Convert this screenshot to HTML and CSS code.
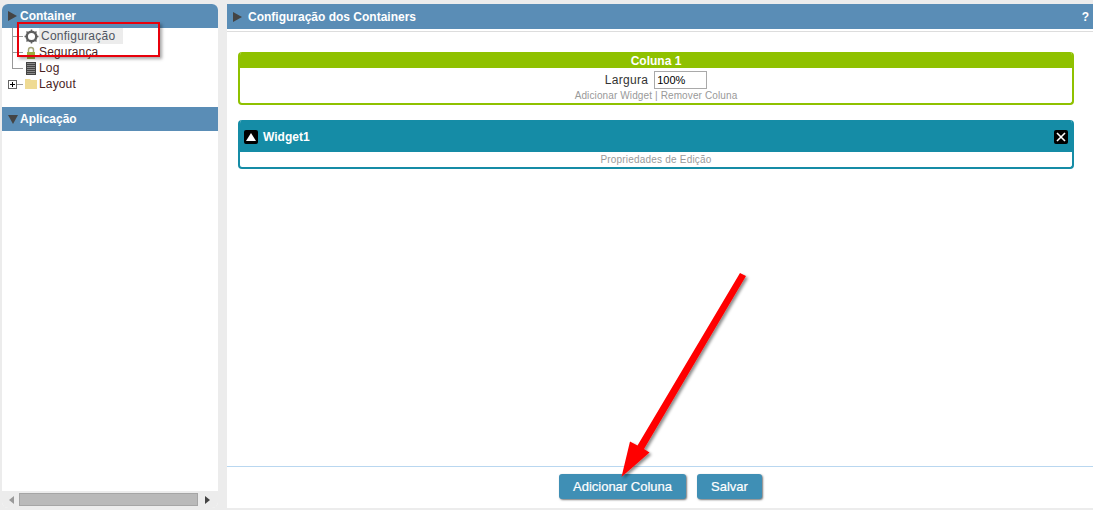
FILE: index.html
```html
<!DOCTYPE html>
<html lang="pt">
<head>
<meta charset="utf-8">
<title>Configuração dos Containers</title>
<link rel="stylesheet" href="styles.css">
</head>
<body>
<div class="app">
  <aside class="side">
    <div class="side-head side-head-first"><span class="tri-right"></span>Container</div>
    <ul class="tree">
      <li class="node selected">
        <svg class="ico" width="15" height="15" viewBox="0 0 15 15"><circle cx="7.500" cy="7.500" r="4.800" fill="none" stroke="#5f5f5f" stroke-width="2.500"/><path d="M7.500 0.500v2.400M7.500 12.100v2.400M0.500 7.500h2.400M12.100 7.500h2.400M2.500 2.500l1.700 1.700M10.800 10.800l1.700 1.700M2.500 12.500l1.700-1.700M10.800 4.200l1.700-1.700" stroke="#5f5f5f" stroke-width="1.500"/></svg>
        <span class="lbl">Configuração</span>
      </li>
      <li class="node">
        <svg class="ico ico-s" width="12" height="13" viewBox="0 0 12 13"><path d="M3.500 6.500V4a2.500 2.500 0 0 1 5 0v2.500" fill="none" stroke="#a5a57c" stroke-width="1.500"/><rect x="2" y="6" width="8" height="7" fill="#9cae3a"/></svg>
        <span class="lbl">Segurança</span>
      </li>
      <li class="node">
        <svg class="ico ico-s" width="12" height="13" viewBox="0 0 12 13"><rect x="1.500" y="0.500" width="9" height="12" fill="#8a8a8a" stroke="#444"/><path d="M2 2.500h8M2 4.500h8M2 6.500h8M2 8.500h8M2 10.500h8" stroke="#444"/></svg>
        <span class="lbl">Log</span>
      </li>
      <li class="node">
        <span class="plus"></span>
        <svg class="ico ico-s" width="12" height="10" viewBox="0 0 12 10"><path d="M0 0h5l1 1h6v9H0z" fill="#efdb94"/></svg>
        <span class="lbl">Layout</span>
      </li>
    </ul>
    <div class="side-head side-head-second"><span class="tri-down"></span>Aplicação</div>
    <div class="side-fill"></div>
    <div class="scrollbar">
      <span class="arrow-left"></span>
      <span class="thumb"></span>
      <span class="arrow-right"></span>
    </div>
  </aside>
  <main class="main">
    <div class="main-head"><span class="tri-right"></span>Configuração dos Containers<span class="help">?</span></div>
    <div class="content">
      <section class="column">
        <h2 class="column-title">Coluna 1</h2>
        <div class="column-row"><label class="width-label">Largura</label><input class="width-input" value="100%"></div>
        <div class="links">Adicionar Widget | Remover Coluna</div>
      </section>
      <section class="widget">
        <div class="widget-head">
          <span class="sq"><svg width="10" height="8" viewBox="0 0 10 8"><path d="M5 0l5 8H0z" fill="#fff"/></svg></span>
          <span class="widget-title">Widget1</span>
          <span class="sq sq-close"><svg width="10" height="10" viewBox="0 0 10 10"><path d="M1 1l8 8M9 1l-8 8" stroke="#fff" stroke-width="1.600"/></svg></span>
        </div>
        <div class="links links-widget">Propriedades de Edição</div>
      </section>
    </div>
    <div class="footer">
      <button class="btn btn-add">Adicionar Coluna</button>
      <button class="btn btn-save">Salvar</button>
    </div>
  </main>
</div>
<div class="redbox"></div>
<svg class="bigarrow" width="160" height="225" viewBox="0 0 160 225">
  <defs><filter id="sh" x="-20%" y="-20%" width="140%" height="140%"><feDropShadow dx="2" dy="2" stdDeviation="1.500" flood-color="#000" flood-opacity=".45"/></filter></defs>
  <path filter="url(#sh)" d="M140 13L146 16L44 189L49.500 192.500L21.500 217L30 181.500L37.500 185.500Z" fill="#f00"/>
</svg>
</body>
</html>
```
FILE: styles.css
```css
* { box-sizing: border-box; }
html, body { margin: 0; padding: 0; height: 510px; overflow: hidden; }
body { background: #ececec; font-family: "Liberation Sans", Arial, sans-serif; position: relative; }
.app { display: flex; height: 510px; padding: 4px 0 2px 2px; gap: 9px; }
.side { width: 216px; background: #fff; display: flex; flex-direction: column; border-radius: 6px; overflow: hidden; }
.side-head { background: #5a8db6; color: #fff; font-weight: bold; font-size: 12px; display: flex; align-items: center; height: 24px; padding-left: 6px; }
.side-head-second { margin-top: 11px; }
.tri-right { width: 0; height: 0; border-style: solid; border-width: 5px 0 5px 9px; border-color: transparent transparent transparent #444; margin-right: 3px; }
.tri-down { width: 0; height: 0; border-style: solid; border-width: 9px 5px 0 5px; border-color: #444 transparent transparent transparent; margin-right: 2px; }
.tree { list-style: none; margin: 0; padding: 0; font-size: 12px; color: #4a1f1f; height: 68px; background-image: linear-gradient(#999,#999); background-size: 1px 41px; background-position: 10px 0; background-repeat: no-repeat; }
.node { height: 16px; display: flex; align-items: center; padding-left: 23px; position: relative; }
.node::before { content: ""; position: absolute; left: 10px; top: 8px; width: 11px; height: 1px; background: #999; }
.ico { flex: none; }
.ico-s { margin-right: 2px; }
.lbl { letter-spacing: .15px; }
.selected { padding-left: 22px; }
.selected .lbl { background: #ececec; color: #4f5560; width: 84px; padding-left: 2px; line-height: 16px; letter-spacing: .25px; }
.plus { position: absolute; left: 6px; top: 4px; width: 9px; height: 9px; border: 1px solid #666; background: linear-gradient(#000,#000) center/5px 1px no-repeat, linear-gradient(#000,#000) center/1px 5px no-repeat, #fff; z-index: 1; }
.side-fill { flex: 1; }
.scrollbar { height: 17px; background: #ececec; display: flex; align-items: center; padding: 0 8px 0 6px; }
.thumb { width: 180px; height: 13px; background: #b9b9b9; border: 1px solid #a5a5a5; margin: 0 7px 0 5px; }
.arrow-left { width: 0; height: 0; border-style: solid; border-width: 4px 5px 4px 0; border-color: transparent #999 transparent transparent; margin-left: 1px; }
.arrow-right { width: 0; height: 0; border-style: solid; border-width: 4px 0 4px 5px; border-color: transparent transparent transparent #444; }
.main { flex: 1; background: #fff; display: flex; flex-direction: column; }
.main-head { background: #5a8db6; color: #fff; font-weight: bold; font-size: 12px; height: 25px; display: flex; align-items: center; padding-left: 6px; box-shadow: 0 2px 0 #fff, 0 3px 0 #ddd; }
.main-head .tri-right { margin-right: 6px; }
.help { margin-left: auto; margin-right: 4px; }
.content { flex: 1; padding: 23px 19px 0 11px; }
.column { border: 2px solid #8fc100; border-top: 0; border-radius: 4px; height: 53px; text-align: center; overflow: hidden; }
.column-title { margin: 0 -2px; background: #8fc100; color: #fff; font-size: 12px; font-weight: bold; height: 16px; line-height: 18px; }
.column-row { display: flex; justify-content: center; align-items: center; gap: 6px; height: 20px; padding-top: 4px; font-size: 12px; color: #333; }
.width-label { letter-spacing: .3px; }
.width-input { width: 53px; height: 18px; border: 1px solid #a9a9a9; font: 11px "Liberation Sans", Arial, sans-serif; padding: 0 2px; color: #000; }
.links { font-size: 10px; letter-spacing: .12px; color: #999; line-height: 12px; margin-top: 2px; }
.widget { margin-top: 15px; border: 2px solid #158ca6; border-top: 0; border-radius: 4px; height: 49px; text-align: center; overflow: hidden; }
.widget-head { margin: 0 -2px; background: #158ca6; height: 32px; display: flex; align-items: center; padding: 2px 6px 0; color: #fff; font-weight: bold; font-size: 12px; }
.widget-title { margin-left: 5px; }
.sq { width: 14px; height: 14px; background: #000; border-radius: 2px; display: flex; align-items: center; justify-content: center; }
.sq-close { margin-left: auto; }
.links-widget { margin-top: 2px; letter-spacing: .2px; }
.footer { height: 42px; border-top: 1px solid #b9d7f0; display: flex; justify-content: center; gap: 11px; padding: 7px 0 0 1px; }
.btn { height: 25px; border: 0; border-radius: 3px; background: #3f8fb5; color: #fff; font: 13px "Liberation Sans", Arial, sans-serif; -webkit-text-stroke: .2px #fff; box-shadow: 1px 1px 2px #777; padding: 0; }
.btn-add { width: 127px; }
.btn-save { width: 65px; }
.redbox { position: absolute; left: 17px; top: 22px; width: 143px; height: 35px; border: 2px solid #e8000b; box-shadow: 2px 2px 3px rgba(0,0,0,.35); }
.bigarrow { position: absolute; left: 600px; top: 260px; }
```
